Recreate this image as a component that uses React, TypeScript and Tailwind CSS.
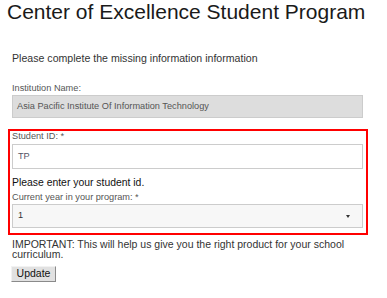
export default function App() {
  return (
    <div className="w-[387px] h-[298px] overflow-hidden bg-white font-['Liberation_Sans',Arial,sans-serif] text-[#222]">
      <h1 className="pl-[7px] text-[21px] leading-[24px] text-[#1a1a1a] whitespace-nowrap">
        Center of Excellence Student Program
      </h1>

      <div className="pl-[8px]">
        <p className="ml-[4px] mt-[28px] text-[10.6px] leading-[13px] text-[#333]">
          Please complete the missing information information
        </p>

        <label className="ml-[4px] mt-[17px] block text-[9.2px] leading-[12px] text-[#555]">
          Institution Name:
        </label>
        <div className="ml-[4px] mt-[1px] flex h-[23px] w-[351px] items-center border border-[#ccc] bg-[#ddd] px-[4px] text-[9.2px] text-[#555]">
          Asia Pacific Institute Of Information Technology
        </div>

        {/* highlighted required fields */}
        <div className="mt-[11px] w-[360px] border-2 border-[#ff0000] pl-[2px] pr-[3px] pb-[5px]">
          <label className="block text-[9.2px] leading-[10px] text-[#555]">Student ID: *</label>
          <div className="mt-[3px] flex h-[25px] w-[351px] items-center border border-[#ccc] bg-white px-[5px] text-[9.2px] text-[#556]">
            TP
          </div>
          <p className="mt-[7px] text-[10.4px] leading-[13px] text-[#111]">Please enter your student id.</p>
          <label className="mt-[3px] block text-[9.2px] leading-[10px] text-[#555]">
            Current year in your program: *
          </label>
          <div className="mt-[2px] flex h-[24px] w-[351px] items-center justify-between border border-[#ccc] bg-[#f7f7f7] pl-[5px] pr-[12px] text-[9.2px] text-[#333]">
            <span>1</span>
            <span className="h-0 w-0 border-x-[2.5px] border-t-[3px] border-x-transparent border-t-[#333]" />
          </div>
        </div>

        <p className="ml-[4px] mt-[4px] w-[350px] text-[10.5px] leading-[10px] text-[#333]">
          IMPORTANT: This will help us give you the right product for your school curriculum.
        </p>
        <button className="ml-[3px] mt-[7px] flex h-[16px] w-[45px] items-center justify-center border border-t-[#f2f2f2] border-l-[#f2f2f2] border-b-[#8a8a8a] border-r-[#8a8a8a] bg-[#e1e1e1] text-[10.5px] text-[#111]">
          Update
        </button>
      </div>
    </div>
  )
}
